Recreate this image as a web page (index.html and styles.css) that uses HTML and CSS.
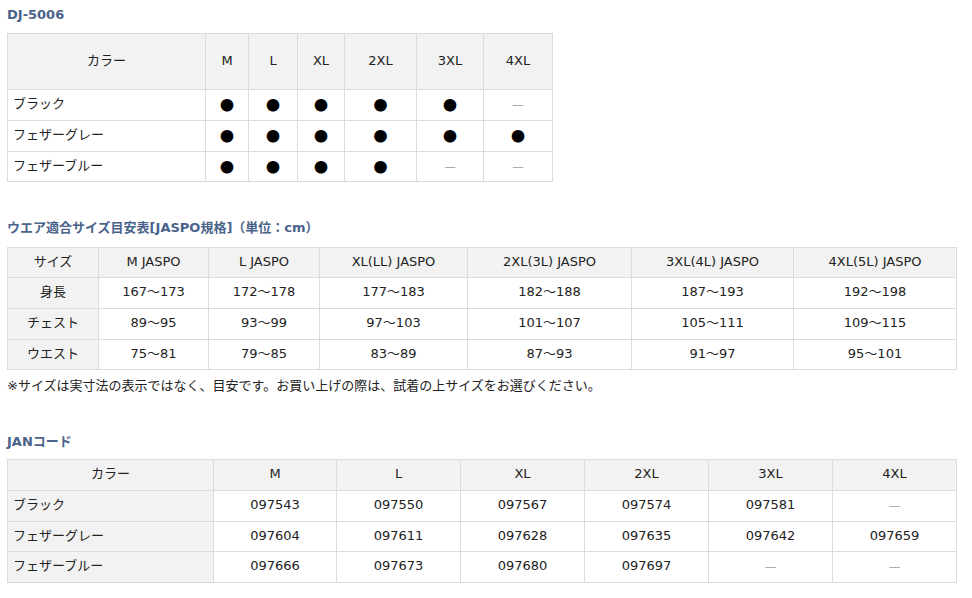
FILE: index.html
```html
<!DOCTYPE html>
<html lang="ja">
<head>
<meta charset="utf-8">
<title>DJ-5006</title>
<link rel="stylesheet" href="styles.css">
</head>
<body>
<div class="page">
  <h3 class="ttl ttl-first">DJ-5006</h3>
  <table class="tbl t1">
    <colgroup>
      <col style="width:198px"><col style="width:43px"><col style="width:49px"><col style="width:47px"><col style="width:72px"><col style="width:67px"><col style="width:69px">
    </colgroup>
    <tr class="hd tall"><th>カラー</th><th>M</th><th>L</th><th>XL</th><th>2XL</th><th>3XL</th><th>4XL</th></tr>
    <tr><td class="name">ブラック</td><td class="dot">●</td><td class="dot">●</td><td class="dot">●</td><td class="dot">●</td><td class="dot">●</td><td class="dash">—</td></tr>
    <tr><td class="name">フェザーグレー</td><td class="dot">●</td><td class="dot">●</td><td class="dot">●</td><td class="dot">●</td><td class="dot">●</td><td class="dot">●</td></tr>
    <tr class="short"><td class="name">フェザーブルー</td><td class="dot">●</td><td class="dot">●</td><td class="dot">●</td><td class="dot">●</td><td class="dash">—</td><td class="dash">—</td></tr>
  </table>

  <h3 class="ttl ttl-mid">ウエア適合サイズ目安表[JASPO規格]（単位：cm）</h3>
  <table class="tbl t2">
    <colgroup>
      <col style="width:91px"><col style="width:110px"><col style="width:111px"><col style="width:148px"><col style="width:164px"><col style="width:162px"><col style="width:163px">
    </colgroup>
    <tr class="hd short"><th>サイズ</th><th>M JASPO</th><th>L JASPO</th><th>XL(LL) JASPO</th><th>2XL(3L) JASPO</th><th>3XL(4L) JASPO</th><th>4XL(5L) JASPO</th></tr>
    <tr><th>身長</th><td>167～173</td><td>172～178</td><td>177～183</td><td>182～188</td><td>187～193</td><td>192～198</td></tr>
    <tr><th>チェスト</th><td>89～95</td><td>93～99</td><td>97～103</td><td>101～107</td><td>105～111</td><td>109～115</td></tr>
    <tr class="short"><th>ウエスト</th><td>75～81</td><td>79～85</td><td>83～89</td><td>87～93</td><td>91～97</td><td>95～101</td></tr>
  </table>
  <p class="note">※サイズは実寸法の表示ではなく、目安です。お買い上げの際は、試着の上サイズをお選びください。</p>

  <h3 class="ttl ttl-jan">JANコード</h3>
  <table class="tbl t3">
    <colgroup>
      <col style="width:206px"><col style="width:123px"><col style="width:124px"><col style="width:124px"><col style="width:124px"><col style="width:124px"><col style="width:124px">
    </colgroup>
    <tr class="hd"><th>カラー</th><th>M</th><th>L</th><th>XL</th><th>2XL</th><th>3XL</th><th>4XL</th></tr>
    <tr><th class="name">ブラック</th><td>097543</td><td>097550</td><td>097567</td><td>097574</td><td>097581</td><td class="dash">—</td></tr>
    <tr class="short"><th class="name">フェザーグレー</th><td>097604</td><td>097611</td><td>097628</td><td>097635</td><td>097642</td><td>097659</td></tr>
    <tr><th class="name">フェザーブルー</th><td>097666</td><td>097673</td><td>097680</td><td>097697</td><td class="dash">—</td><td class="dash">—</td></tr>
  </table>
</div>
</body>
</html>
```

FILE: styles.css
```css
html, body {
  margin: 0;
  padding: 0;
  background: #fff;
}
body {
  font-family: "DejaVu Sans", "Noto Sans CJK JP", sans-serif;
  font-size: 13px;
  color: #222;
}
.page {
  padding: 6px 7px 0;
}
.ttl {
  margin: 0;
  height: 18px;
  font-size: 13px;
  line-height: 18px;
  font-weight: bold;
  color: #4a638a;
  white-space: nowrap;
}
.ttl-first {
  margin-bottom: 9px;
}
.ttl-mid {
  margin-top: 37px;
  margin-bottom: 10px;
}
.ttl-jan {
  margin-top: 38px;
  margin-bottom: 8px;
}
.tbl {
  border-collapse: collapse;
  table-layout: fixed;
  border: 1px solid #dcdcdc;
}
.t1 { width: 545px; }
.t2, .t3 { width: 949px; }
.tbl th,
.tbl td {
  border: 1px solid #dcdcdc;
  padding: 0 4px 2px;
  height: 28px;
  text-align: center;
  vertical-align: middle;
  font-weight: normal;
  line-height: 18px;
  white-space: nowrap;
}
.tbl th {
  background: #f2f2f2;
}
.tbl tr.tall th { height: 53px; }
.tbl tr.short td,
.tbl tr.short th { height: 27px; }
.tbl .name {
  text-align: left;
  padding-left: 5px;
}
.t1 td.name { background: #fff; }
.dot {
  font-family: "Noto Sans CJK JP", sans-serif;
  font-size: 14px;
  color: #000;
}
.dash {
  font-family: "Noto Sans CJK JP", sans-serif;
  color: #999;
}
.note {
  margin: 7px 0 0;
  height: 18px;
  line-height: 18px;
  white-space: nowrap;
}
```
